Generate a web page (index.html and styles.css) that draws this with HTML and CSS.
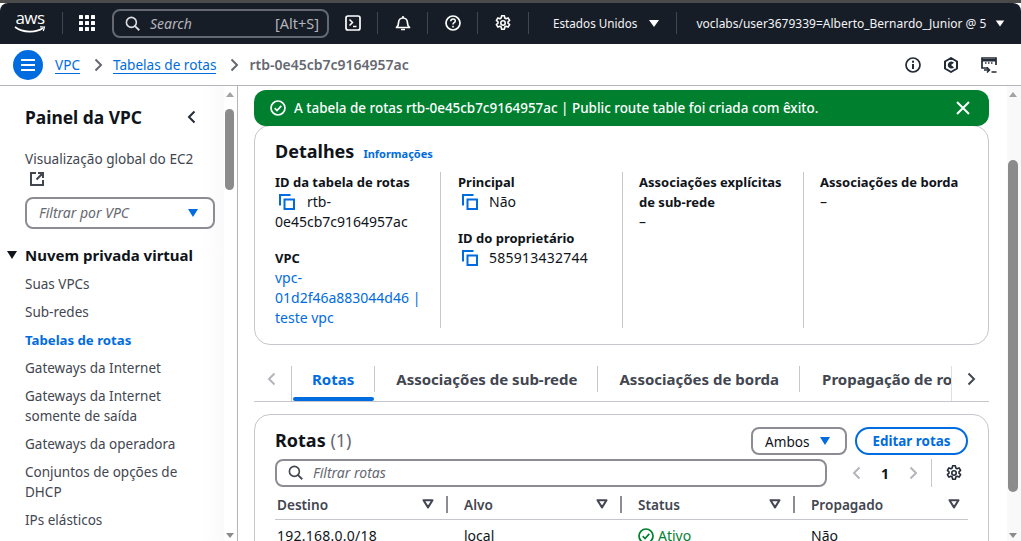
FILE: index.html
```html
<!DOCTYPE html>
<html lang="pt-BR">
<head>
<meta charset="UTF-8">
<meta name="viewport" content="width=device-width, initial-scale=1.0">
<title>Tabelas de rotas | VPC</title>
<link rel="stylesheet" href="styles.css">
</head>
<body>
<svg class="sprites" width="0" height="0" aria-hidden="true">
  <symbol id="copy" viewBox="0 0 16 16"><path d="M1 11.500V1h10.500M5.500 5.500H15V15H5.500z" fill="none" stroke="currentColor" stroke-width="2"/></symbol>
  <symbol id="search" viewBox="0 0 16 16"><circle cx="6.800" cy="6.800" r="5.300" fill="none" stroke="currentColor" stroke-width="1.700"/><path d="M10.700 10.700l4.500 4.500" fill="none" stroke="currentColor" stroke-width="1.900"/></symbol>
  <symbol id="gear" viewBox="0 0 16 16"><path d="M6.600 .8h2.800l.4 2.200 1.300.7 2-.8 1.500 2.500-1.600 1.400v1.400l1.600 1.400-1.500 2.500-2-.8-1.300.7-.4 2.200H6.600l-.4-2.200-1.300-.7-2 .8-1.500-2.500 1.600-1.400V6.800L1.400 5.400l1.500-2.500 2 .8 1.300-.7z" fill="none" stroke="currentColor" stroke-width="1.600" stroke-linejoin="round"/><circle cx="8" cy="8" r="2.200" fill="none" stroke="currentColor" stroke-width="1.600"/></symbol>
  <symbol id="sort" viewBox="0 0 12 10"><path d="M1.500 1.200h9L6 8.400z" fill="none" stroke="currentColor" stroke-width="2" stroke-linejoin="round"/></symbol>
</svg>

<div class="topbar">
  <div class="aws-logo">
    <span>aws</span>
    <svg width="32" height="8" viewBox="0 0 32 8"><path d="M1 1c8 6 21 6 28 1" fill="none" stroke="#fff" stroke-width="1.600"/><path d="M26 .8l4.500.2-1.200 4" fill="none" stroke="#fff" stroke-width="1.200"/></svg>
  </div>
  <div class="top-sep"></div>
  <svg class="grid-icon" width="16" height="16" viewBox="0 0 16 16" fill="#fff">
    <rect width="4" height="4" rx=".6"/><rect x="6" width="4" height="4" rx=".6"/><rect x="12" width="4" height="4" rx=".6"/>
    <rect y="6" width="4" height="4" rx=".6"/><rect x="6" y="6" width="4" height="4" rx=".6"/><rect x="12" y="6" width="4" height="4" rx=".6"/>
    <rect y="12" width="4" height="4" rx=".6"/><rect x="6" y="12" width="4" height="4" rx=".6"/><rect x="12" y="12" width="4" height="4" rx=".6"/>
  </svg>
  <div class="top-search">
    <svg class="ic-search" width="15" height="15"><use href="#search"/></svg>
    <span class="top-search-text">Search</span>
    <span class="top-search-key">[Alt+S]</span>
  </div>
  <svg class="top-ic ic-shell" width="16" height="16" viewBox="0 0 16 16"><rect x="1" y="1" width="14" height="14" rx="2" fill="none" stroke="#fff" stroke-width="1.700"/><path d="M4.500 4.500L7.500 7.500 4.500 10.500M8 11.500h3.500" fill="none" stroke="#fff" stroke-width="1.500"/></svg>
  <div class="top-sep sep-a"></div>
  <svg class="top-ic ic-bell" width="16" height="16" viewBox="0 0 16 16"><path d="M1.500 12.500c1.500-1 2-2 2-4.500 0-3 2-5 4.500-5s4.500 2 4.500 5c0 2.500.5 3.500 2 4.500z" fill="none" stroke="#fff" stroke-width="1.700" stroke-linejoin="round"/><path d="M6 14.500h4M8 1v2" stroke="#fff" stroke-width="1.600"/></svg>
  <div class="top-sep sep-b"></div>
  <svg class="top-ic ic-help" width="16" height="16" viewBox="0 0 16 16"><circle cx="8" cy="8" r="7" fill="none" stroke="#fff" stroke-width="1.700"/><path d="M5.800 6.200c0-3 4.500-3 4.500-.2 0 1.700-2.300 1.700-2.300 3.400" fill="none" stroke="#fff" stroke-width="1.500"/><rect x="7.200" y="10.800" width="1.600" height="1.700" fill="#fff"/></svg>
  <div class="top-sep sep-c"></div>
  <svg class="top-ic ic-gear" width="16" height="16"><use href="#gear"/></svg>
  <div class="top-sep sep-d"></div>
  <span class="region">Estados Unidos</span>
  <span class="caret-white region-caret"></span>
  <div class="top-sep sep-e"></div>
  <span class="account">voclabs/user3679339=Alberto_Bernardo_Junior @ 5</span>
  <span class="caret-white account-caret"></span>
</div>

<div class="crumbbar">
  <div class="menu-btn">
    <svg width="16" height="14" viewBox="0 0 16 14"><path d="M1 2h14M1 7h14M1 12h14" stroke="#fff" stroke-width="2"/></svg>
  </div>
  <a class="crumb-link" href="#">VPC</a>
  <svg class="crumb-arrow" width="9" height="14" viewBox="0 0 9 14"><path d="M1.500 1.500L7 7l-5.500 5.500" fill="none" stroke="#656871" stroke-width="2"/></svg>
  <a class="crumb-link" href="#">Tabelas de rotas</a>
  <svg class="crumb-arrow" width="9" height="14" viewBox="0 0 9 14"><path d="M1.500 1.500L7 7l-5.500 5.500" fill="none" stroke="#656871" stroke-width="2"/></svg>
  <span class="crumb-current">rtb-0e45cb7c9164957ac</span>
  <div class="crumb-tools">
    <svg width="16" height="16" viewBox="0 0 16 16"><circle cx="8" cy="8" r="7" fill="none" stroke="#232b37" stroke-width="1.700"/><path d="M8 7v5" stroke="#232b37" stroke-width="2"/><rect x="7" y="3.700" width="2" height="2" fill="#232b37"/></svg>
    <svg width="16" height="16" viewBox="0 0 16 16"><path d="M8 1l6 3.500v7L8 15l-6-3.500v-7z" fill="none" stroke="#232b37" stroke-width="2" stroke-linejoin="round"/><path d="M11 5.800A3.500 3.500 0 1 0 11 10.200L8 8z" fill="#232b37"/></svg>
    <svg width="16" height="16" viewBox="0 0 16 16"><path d="M7 11H1V1h14v7" fill="none" stroke="#232b37" stroke-width="1.700"/><path d="M1 2h14v2.500H1z" fill="#232b37"/><path d="M4 6h1.500M7 6h1.500M10 6h1.500" stroke="#232b37" stroke-width="1.500"/><path d="M3 13h5M6 10.500L8.500 13 6 15.500M10.500 15h5" fill="none" stroke="#232b37" stroke-width="1.500"/></svg>
  </div>
</div>

<div class="layout">
  <nav class="sidebar">
    <div class="sidebar-inner">
      <div class="side-head">
        <h2>Painel da VPC</h2>
        <svg width="9" height="14" viewBox="0 0 9 14"><path d="M7.500 1.500L2 7l5.500 5.500" fill="none" stroke="#232b37" stroke-width="2"/></svg>
      </div>
      <div class="side-link side-global">Visualização global do EC2</div>
      <svg class="ext-icon" width="14" height="14" viewBox="0 0 14 14"><path d="M6 1H1v12h12V8M8 1h5v5M13 1L6.500 7.500" fill="none" stroke="#424650" stroke-width="2"/></svg>
      <div class="vpc-filter">
        <span>Filtrar por VPC</span>
        <span class="caret-blue"></span>
      </div>
      <div class="side-section">
        <span class="caret-black"></span>
        <span>Nuvem privada virtual</span>
      </div>
      <ul class="side-list">
        <li>Suas VPCs</li>
        <li>Sub-redes</li>
        <li class="active">Tabelas de rotas</li>
        <li>Gateways da Internet</li>
        <li>Gateways da Internet somente de saída</li>
        <li>Gateways da operadora</li>
        <li>Conjuntos de opções de DHCP</li>
        <li>IPs elásticos</li>
      </ul>
    </div>
    <div class="scrollbar side-scroll">
      <span class="sb-up"></span>
      <div class="sb-track"><div class="sb-thumb"></div></div>
      <span class="sb-down"></span>
    </div>
  </nav>

  <main class="main">
    <div class="content">
      <div class="flash">
        <svg width="16" height="16" viewBox="0 0 16 16"><circle cx="8" cy="8" r="7" fill="none" stroke="#fff" stroke-width="1.700"/><path d="M4.700 8.200l2.300 2.300 4.300-4.600" fill="none" stroke="#fff" stroke-width="1.700"/></svg>
        <span class="flash-text">A tabela de rotas rtb-0e45cb7c9164957ac | Public route table foi criada com êxito.</span>
        <svg class="flash-close" width="14" height="14" viewBox="0 0 14 14"><path d="M1 1l12 12M13 1L1 13" stroke="#fff" stroke-width="2"/></svg>
      </div>

      <section class="card details">
        <div class="card-title">
          <h2>Detalhes</h2>
          <a href="#">Informações</a>
        </div>
        <div class="detail-cols">
          <div class="col">
            <div class="field">
              <div class="label">ID da tabela de rotas</div>
              <div class="value"><svg class="copy" width="16" height="16"><use href="#copy"/></svg>rtb-<br>0e45cb7c9164957ac</div>
            </div>
            <div class="field">
              <div class="label">VPC</div>
              <a class="value value-link" href="#">vpc-<br>01d2f46a883044d46 |<br>teste vpc</a>
            </div>
          </div>
          <div class="col">
            <div class="field">
              <div class="label">Principal</div>
              <div class="value"><svg class="copy" width="16" height="16"><use href="#copy"/></svg>Não</div>
            </div>
            <div class="field">
              <div class="label">ID do proprietário</div>
              <div class="value num"><svg class="copy" width="16" height="16"><use href="#copy"/></svg>585913432744</div>
            </div>
          </div>
          <div class="col">
            <div class="field">
              <div class="label">Associações explícitas de sub-rede</div>
              <div class="value">–</div>
            </div>
          </div>
          <div class="col">
            <div class="field">
              <div class="label">Associações de borda</div>
              <div class="value">–</div>
            </div>
          </div>
        </div>
      </section>

      <div class="tabs">
        <svg class="tab-arrow" width="9" height="14" viewBox="0 0 9 14"><path d="M7.500 1.500L2 7l5.500 5.500" fill="none" stroke="#b4b4bb" stroke-width="2"/></svg>
        <div class="tab-strip">
          <div class="tab active">Rotas</div>
          <div class="tab">Associações de sub-rede</div>
          <div class="tab">Associações de borda</div>
          <div class="tab last">Propagação de rotas</div>
        </div>
        <svg class="tab-arrow" width="9" height="14" viewBox="0 0 9 14"><path d="M1.500 1.500L7 7l-5.500 5.500" fill="none" stroke="#424650" stroke-width="2"/></svg>
      </div>

      <section class="card routes">
        <div class="routes-head">
          <h2>Rotas <span>(1)</span></h2>
          <div class="ambos">Ambos<span class="caret-blue"></span></div>
          <a class="edit-btn" href="#">Editar rotas</a>
        </div>
        <div class="routes-tools">
          <div class="route-filter">
            <svg width="15" height="15"><use href="#search"/></svg>
            <span>Filtrar rotas</span>
          </div>
          <div class="pager">
            <svg width="9" height="14" viewBox="0 0 9 14"><path d="M7.500 1.500L2 7l5.500 5.500" fill="none" stroke="#b4b4bb" stroke-width="2"/></svg>
            <b>1</b>
            <svg width="9" height="14" viewBox="0 0 9 14"><path d="M1.500 1.500L7 7l-5.500 5.500" fill="none" stroke="#b4b4bb" stroke-width="2"/></svg>
          </div>
          <div class="prefs"><svg width="16" height="16"><use href="#gear"/></svg></div>
        </div>
        <div class="table">
          <div class="th th-1">Destino<svg width="12" height="10"><use href="#sort"/></svg></div>
          <div class="th th-2">Alvo<svg width="12" height="10"><use href="#sort"/></svg></div>
          <div class="th th-3">Status<svg width="12" height="10"><use href="#sort"/></svg></div>
          <div class="th th-4">Propagado<svg width="12" height="10"><use href="#sort"/></svg></div>
          <div class="td num">192.168.0.0/18</div>
          <div class="td">local</div>
          <div class="td td-ok"><svg width="16" height="16" viewBox="0 0 16 16"><circle cx="8" cy="8" r="7" fill="none" stroke="#00802f" stroke-width="1.700"/><path d="M4.700 8.200l2.300 2.300 4.300-4.600" fill="none" stroke="#00802f" stroke-width="1.700"/></svg>Ativo</div>
          <div class="td">Não</div>
        </div>
      </section>
    </div>
    <div class="scrollbar main-scroll">
      <span class="sb-up"></span>
      <div class="sb-track"><div class="sb-thumb"></div></div>
      <span class="sb-down"></span>
    </div>
  </main>
</div>
</body>
</html>
```
FILE: styles.css
```css
* {
  box-sizing: border-box;
}
html, body {
  height: 100%;
}
body {
  margin: 0;
  background-color: #ffffff;
  color: #0f141a;
  font-family: 'Noto Sans', sans-serif;
  font-size: 13px;
  overflow: hidden;
  display: flex;
  flex-direction: column;
  border-top: 3px solid #4a4a4a;
}
a {
  text-decoration: none;
}
h2 {
  margin: 0;
}
.sprites {
  display: block;
  height: 0;
}

/* top nav */
.topbar {
  height: 41px;
  flex: none;
  background-color: #161d26;
  border-radius: 8px 8px 0 0;
  display: flex;
  align-items: center;
  color: #fff;
  padding-left: 14px;
  padding-bottom: 1px;
}
.aws-logo {
  width: 32px;
  display: flex;
  flex-direction: column;
  align-items: center;
  line-height: 1;
}
.aws-logo span {
  font-family: 'Open Sans', sans-serif;
  font-size: 17px;
  height: 14px;
  line-height: 12px;
  letter-spacing: -.5px;
}
.aws-logo svg {
  display: block;
}
.top-sep {
  width: 1px;
  height: 22px;
  background-color: #424650;
  margin-left: 16px;
  flex: none;
}
.grid-icon {
  margin-left: 16px;
  flex: none;
}
.top-search {
  width: 217px;
  height: 29px;
  margin-left: 17px;
  border: 2px solid #656871;
  border-radius: 8px;
  display: flex;
  align-items: center;
  padding: 0 8px 0 11px;
  flex: none;
}
.ic-search {
  color: #dedee3;
  flex: none;
}
.top-search-text {
  margin-left: 10px;
  font-style: italic;
  color: #b4b4bb;
  font-size: 14px;
  flex: 1;
}
.top-search-key {
  color: #b4b4bb;
  font-size: 14.500px;
}
.top-ic {
  flex: none;
}
.ic-shell {
  margin-left: 16px;
}
.sep-a, .sep-b, .sep-c {
  margin-left: 16px;
}
.ic-bell, .ic-help, .ic-gear {
  margin-left: 17px;
}
.sep-d {
  margin-left: 17px;
}
.region {
  margin-left: 24px;
  font-size: 11.700px;
  color: #f3f3f7;
}
.caret-white {
  width: 0;
  height: 0;
  border-left: 5px solid transparent;
  border-right: 5px solid transparent;
  border-top: 7px solid #fff;
  flex: none;
}
.region-caret {
  margin-left: 12px;
}
.sep-e {
  margin-left: 17px;
}
.account {
  margin-left: 19px;
  font-size: 12px;
  white-space: nowrap;
  color: #f3f3f7;
}
.account-caret {
  margin-left: 9px;
  transform: scale(.85);
}

/* breadcrumbs */
.crumbbar {
  height: 42px;
  flex: none;
  border-bottom: 1px solid #b4b4bb;
  display: flex;
  align-items: center;
  padding-left: 13px;
  padding-right: 24px;
  font-size: 13.600px;
}
.menu-btn {
  width: 30px;
  height: 30px;
  border-radius: 50%;
  background-color: #006ce0;
  display: flex;
  align-items: center;
  justify-content: center;
  flex: none;
}
.crumb-link {
  color: #006ce0;
  border-bottom: 1px solid #006ce0;
  line-height: 16px;
  margin: 2px 0 0 12px;
}
.crumb-arrow {
  margin-left: 14px;
  flex: none;
}
.crumb-link + .crumb-arrow + .crumb-link {
  margin-left: 10px;
}
.crumb-current {
  color: #656871;
  font-weight: 600;
  font-size: 14px;
  margin-left: 10px;
}
.crumb-tools {
  margin-left: auto;
  display: flex;
  gap: 22px;
}

/* page body */
.layout {
  flex: 1;
  min-height: 0;
  display: flex;
}
.sidebar {
  width: 238px;
  flex: none;
  border-right: 1px solid #b4b4bb;
  display: flex;
  overflow: hidden;
}
.sidebar-inner {
  width: 224px;
  flex: none;
  padding-left: 25px;
  background: linear-gradient(to right, #fff 90%, #fafafb);
}
.side-head {
  display: flex;
  align-items: center;
  justify-content: space-between;
  padding-top: 20px;
  padding-right: 28px;
}
.side-head h2 {
  font-size: 17.400px;
  font-weight: 700;
  line-height: 22px;
  color: #0f141a;
}
.side-global {
  margin-top: 21px;
  font-size: 13.600px;
  line-height: 20px;
  color: #424650;
  white-space: nowrap;
}
.ext-icon {
  display: block;
  margin: 3px 0 0 5px;
}
.vpc-filter {
  width: 190px;
  height: 32px;
  margin-top: 11px;
  border: 2px solid #8c8c94;
  border-radius: 8px;
  display: flex;
  align-items: center;
  justify-content: space-between;
  padding: 0 15px 1px 12px;
  font-style: italic;
  color: #656871;
  font-size: 14px;
}
.caret-blue {
  width: 0;
  height: 0;
  border-left: 5.500px solid transparent;
  border-right: 5.500px solid transparent;
  border-top: 8px solid #006ce0;
  flex: none;
}
.side-section {
  display: flex;
  align-items: center;
  margin: 15px 0 0 -18px;
  font-size: 15px;
  font-weight: 700;
  line-height: 22px;
  color: #0f141a;
}
.caret-black {
  width: 0;
  height: 0;
  border-left: 5.500px solid transparent;
  border-right: 5.500px solid transparent;
  border-top: 8px solid #0f141a;
  margin-right: 8px;
  flex: none;
}
.side-list {
  list-style: none;
  margin: 8px 0 0;
  padding: 0;
  width: 165px;
  font-size: 13.500px;
  line-height: 20px;
  color: #424650;
}
.side-list li {
  margin-bottom: 8px;
}
.side-list .active {
  color: #006ce0;
  font-weight: 700;
  font-size: 13.200px;
}

/* scrollbars */
.scrollbar {
  display: flex;
  flex-direction: column;
  align-items: center;
  flex: none;
}
.side-scroll {
  width: 11px;
}
.main-scroll {
  width: 14px;
  padding-right: 3px;
  background-color: #f9f9f9;
}
.sb-up, .sb-down {
  width: 0;
  height: 0;
  flex: none;
  border-left: 4.500px solid transparent;
  border-right: 4.500px solid transparent;
}
.sb-up {
  border-bottom: 5px solid #a3a3a3;
  margin-top: 6px;
}
.sb-down {
  border-top: 5px solid #8b8b8b;
  margin-bottom: 3px;
}
.sb-track {
  flex: 1;
  width: 100%;
}
.sb-thumb {
  border-radius: 5px;
  background-color: #8b8b8b;
}
.side-scroll .sb-thumb {
  width: 9px;
  margin: 12px auto 0;
  height: 81px;
}
.main-scroll .sb-thumb {
  width: 10px;
  margin: 63px auto 0;
  height: 332px;
}

/* content */
.main {
  flex: 1;
  min-width: 0;
  display: flex;
  overflow: hidden;
}
.content {
  flex: 1;
  min-width: 0;
  position: relative;
  padding: 39px 18px 0 16px;
  overflow: hidden;
}
.flash {
  position: absolute;
  top: 4px;
  left: 16px;
  right: 18px;
  height: 36px;
  z-index: 2;
  background-color: #00802f;
  color: #fff;
  border-radius: 12px;
  display: flex;
  align-items: center;
  padding: 0 19px 0 16px;
  font-size: 13.450px;
  font-weight: 500;
}
.flash-text {
  margin-left: 8px;
  flex: 1;
}
.card {
  border: 1px solid #c6c6cd;
  border-radius: 16px;
  background-color: #fff;
}
.details {
  height: 220px;
  padding: 13px 20px 0;
}
.card-title {
  display: flex;
  align-items: baseline;
  gap: 9px;
}
.card-title h2, .routes-head h2 {
  font-size: 18px;
  font-weight: 700;
  line-height: 24px;
}
.card-title a {
  color: #006ce0;
  font-size: 11px;
  font-weight: 700;
}
.detail-cols {
  display: grid;
  grid-template-columns: 166px 182px 181px 1fr;
  margin-top: 9px;
  margin-right: -1px;
}
.col {
  height: 156px;
  border-right: 1px solid #c6c6cd;
  padding-right: 16px;
}
.col + .col {
  padding-left: 16px;
}
.col:nth-child(2) {
  padding-left: 17px;
}
.col:last-child {
  border-right: none;
  padding-right: 0;
}
.field {
  margin-bottom: 16px;
}
.label {
  font-size: 13px;
  font-weight: 700;
  line-height: 20px;
}
.value {
  font-size: 14px;
  line-height: 20px;
  color: #0f141a;
  display: block;
}
.value-link {
  color: #006ce0;
}
.num {
  letter-spacing: .25px;
}
.copy {
  color: #006ce0;
  vertical-align: -3px;
  margin: 0 12px 0 4px;
}
.col:nth-child(2) .copy {
  margin-right: 11px;
}

/* tabs */
.tabs {
  margin-top: 18px;
  height: 39px;
  border-bottom: 1px solid #c6c6cd;
  display: flex;
  align-items: flex-start;
}
.tab-arrow {
  flex: none;
  margin-top: 9px;
}
.tabs .tab-arrow:first-child {
  margin-left: 13px;
}
.tabs .tab-arrow:last-child {
  margin-right: 13px;
}
.tab-strip {
  flex: 1;
  min-width: 0;
  display: flex;
  overflow: hidden;
  margin: 3px 15px 0;
  border-left: 1px solid #c6c6cd;
  height: 35px;
  border-right: 1px solid #dedee3;
}
.tab {
  flex: none;
  font-size: 15px;
  font-weight: 700;
  color: #424650;
  height: 26px;
  line-height: 26px;
  padding: 0 20px 0 21px;
  border-right: 1px solid #c6c6cd;
  white-space: nowrap;
}
.tab.active {
  padding-left: 20px;
}
.tab.last {
  border-right: none;
  padding-left: 22px;
}
.tab.active {
  color: #006ce0;
  position: relative;
}
.tab.active::after {
  content: "";
  position: absolute;
  left: 1px;
  right: 0;
  top: 31px;
  height: 4px;
  border-radius: 2px;
  background-color: #006ce0;
}

/* routes */
.routes {
  margin-top: 12px;
  padding: 12px 20px 0;
  height: 200px;
}
.routes-head {
  display: flex;
  align-items: center;
}
.routes-head h2 {
  flex: 1;
  margin-top: -2px;
}
.routes-head h2 span {
  font-weight: 400;
  color: #656871;
}
.ambos {
  width: 96px;
  height: 28px;
  border: 2px solid #8c8c94;
  border-radius: 8px;
  display: flex;
  align-items: center;
  gap: 10px;
  padding-left: 12px;
  font-size: 13.600px;
}
.edit-btn {
  width: 113px;
  height: 28px;
  margin-left: 8px;
  border: 2px solid #006ce0;
  border-radius: 14px;
  color: #006ce0;
  font-weight: 700;
  font-size: 13.400px;
  display: flex;
  align-items: center;
  justify-content: center;
}
.routes-tools {
  display: flex;
  align-items: center;
  margin-top: 4px;
}
.route-filter {
  width: 552px;
  height: 28px;
  border: 2px solid #8c8c94;
  border-radius: 8px;
  display: flex;
  align-items: center;
  padding: 0 0 1px 11px;
  gap: 10px;
  color: #656871;
  font-style: italic;
  font-size: 14px;
  flex: none;
}
.route-filter svg {
  color: #424650;
}
.pager {
  margin-left: 25px;
  display: flex;
  align-items: center;
  gap: 20px;
  font-size: 14px;
}
.prefs {
  margin-left: 13px;
  padding-left: 14px;
  height: 28px;
  border-left: 1px solid #c6c6cd;
  display: flex;
  align-items: center;
  color: #232b37;
}
.table {
  display: grid;
  grid-template-columns: 173px 174px 173px 1fr;
  margin-top: 2px;
  font-size: 13.600px;
}
.th {
  height: 31px;
  border-bottom: 1px solid #c6c6cd;
  display: flex;
  align-items: center;
  justify-content: space-between;
  padding: 0 8px 0 2px;
  font-weight: 600;
  color: #424650;
  position: relative;
}
.th-2, .th-3, .th-4 {
  padding-left: 16px;
}
.th-1::after, .th-2::after, .th-3::after {
  content: "";
  position: absolute;
  right: 0;
  top: 7px;
  width: 2px;
  height: 17px;
  background-color: #8c8c94;
}
.th svg {
  color: #424650;
  margin-right: 6px;
}
.th-4 svg {
  margin-right: 0;
}
.td {
  padding: 6px 2px 0;
  line-height: 20px;
  font-size: 14px;
}
.td:nth-child(n+6) {
  padding-left: 16px;
}
.td-ok {
  color: #00802f;
  display: flex;
  align-items: center;
  gap: 4px;
  height: 26px;
}
```
